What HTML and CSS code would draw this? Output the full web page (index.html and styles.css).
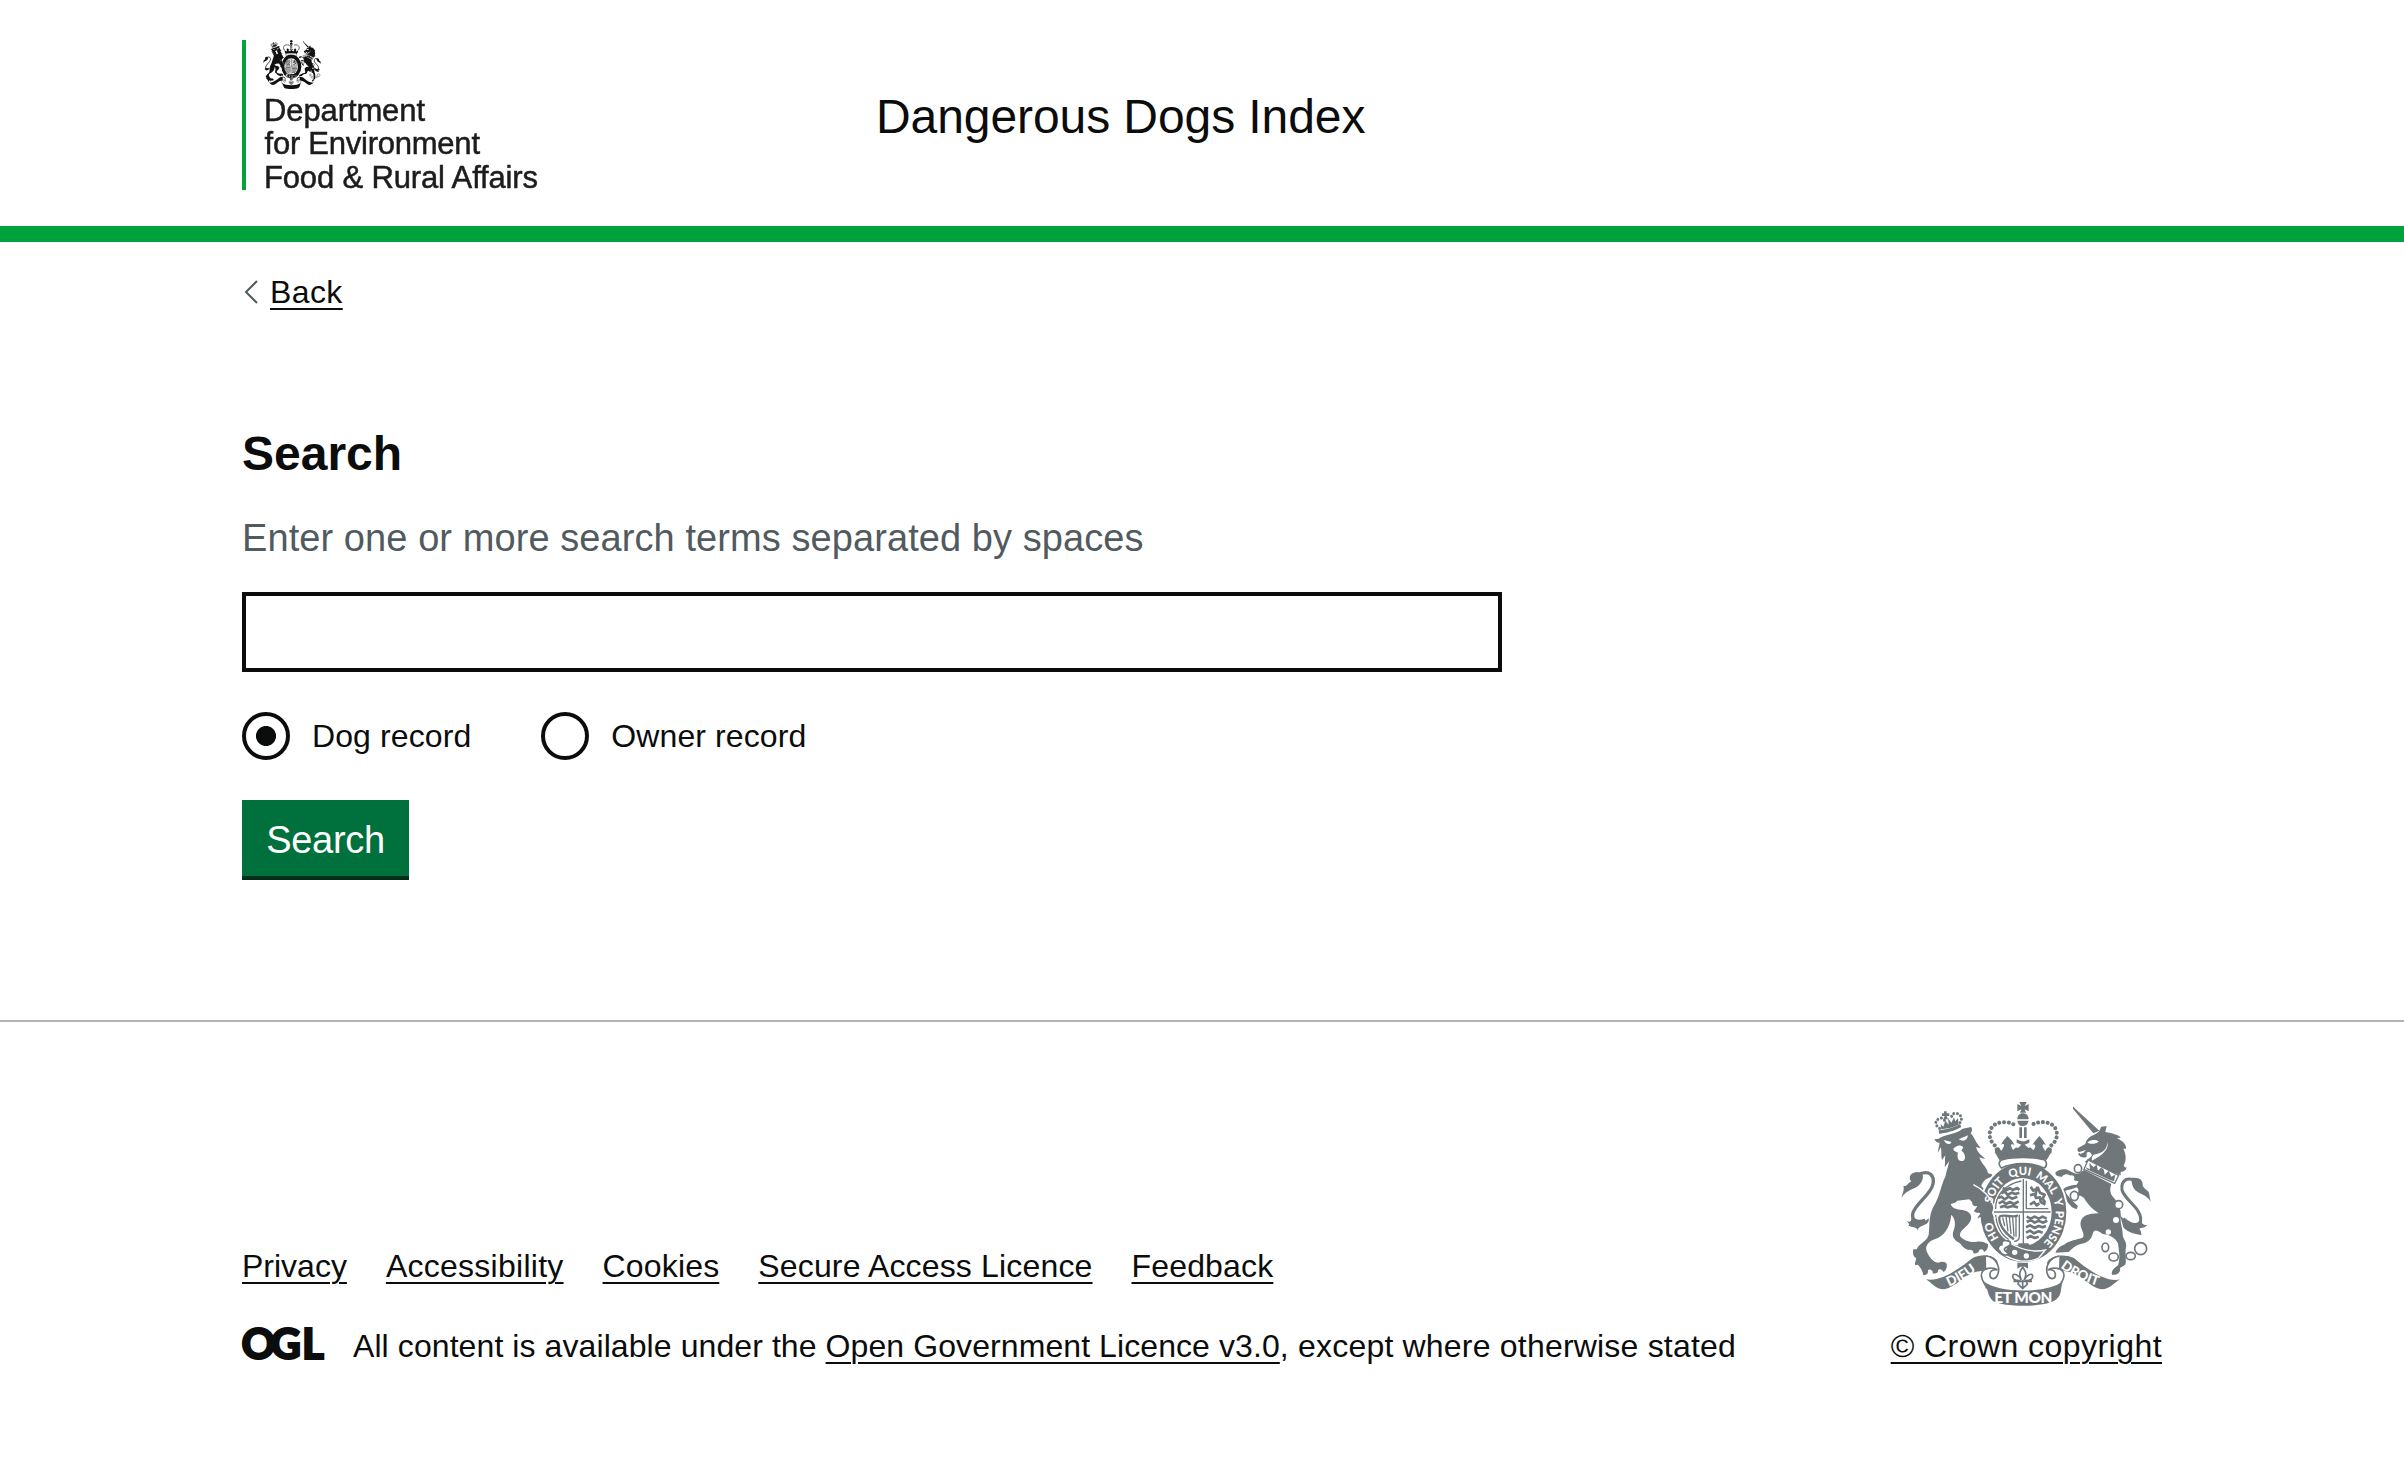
FILE: index.html
```html
<!DOCTYPE html>
<html lang="en">
<head>
<meta charset="utf-8">
<title>Search - Dangerous Dogs Index</title>
<link rel="stylesheet" href="styles.css">
</head>
<body>
<svg class="sprite" aria-hidden="true">
  <symbol id="crest" viewBox="63 66 750 612" preserveAspectRatio="none">
    <!-- lion: tail, body, crown -->
    <path fill="none" stroke="currentColor" stroke-width="10" d="M119 282C148 270 164 286 159 312C152 346 104 372 98 402C96 420 108 430 136 421"/>
    <path fill="currentColor" d="M64 356C68 338 74 328 70 318C82 320 80 312 94 304C88 300 88 290 92 284C104 272 122 274 128 284C132 296 122 316 104 324C86 332 70 340 64 356ZM80 422C90 430 96 422 94 410L112 420C124 428 138 424 146 414L146 424C140 438 118 436 112 450C110 440 96 444 84 436C92 434 84 428 80 422Z"/>
    <path fill="currentColor" d="M163 178L176 176C188 164 232 162 248 146L273 141C278 146 276 154 272 160C284 172 286 188 302 203C296 204 292 202 288 200C292 218 304 226 316 236C308 236 302 234 298 232C304 252 322 262 324 280C340 282 344 290 332 292C318 296 308 304 304 318C322 338 336 360 338 384L332 398L340 416L330 414C330 426 318 428 310 422C314 414 306 412 296 416C292 406 302 404 306 398C296 398 286 400 282 392C290 390 296 384 292 378C282 380 276 376 276 366L268 358L232 362C228 368 218 370 212 372C216 386 230 388 248 390C272 394 280 410 268 428C258 444 238 450 240 468C248 480 270 488 288 486C304 482 314 488 324 492C326 502 320 514 312 516C310 508 304 506 298 510C298 518 288 522 280 520C282 514 274 508 266 510C252 506 246 496 238 488C226 482 214 472 220 454C228 434 226 416 214 404C210 444 192 468 164 478C146 484 134 498 140 514C148 532 158 546 174 548C186 544 196 544 200 552C202 562 198 572 190 576C186 568 180 566 174 570C176 578 168 582 158 580C160 570 150 566 144 570C146 580 140 586 130 586C128 574 124 566 114 554L106 556C102 548 110 540 108 534C98 530 98 516 100 508L110 508C116 490 142 484 146 464C150 426 146 410 160 380C180 350 182 316 196 290C200 272 204 260 208 244L194 262C196 246 194 240 196 226L186 240C182 222 186 214 182 202L174 218C174 204 180 194 178 188C172 188 168 186 163 178Z"/>
    <path fill="#fff" d="M192 180L214 186C212 196 196 194 192 180ZM236 178L264 166C262 182 250 186 236 178ZM220 206C228 196 242 192 250 202L244 212C256 218 260 240 248 243C234 244 230 232 234 218L222 212Z"/>
    <path fill="currentColor" d="M176 151C196 149 224 142 240 132L244 141C226 152 196 160 177 161Z"/>
    <path fill="none" stroke="currentColor" stroke-width="9" stroke-linecap="round" stroke-dasharray=".1 11" d="M179 145C166 138 162 122 178 116C188 110 192 120 196 124M240 128C250 116 242 100 226 100C216 100 216 108 212 116"/>
    <path fill="currentColor" d="M184 148L182 132L190 140L196 122L206 134L204 114L214 128L222 112L226 124L234 114L236 134L210 144ZM192 94H200V100H208V108H200L204 118H190L194 108H186V100H192Z"/>
    <!-- unicorn: horn, body, chained collar, tail -->
    <path fill="currentColor" d="M579 80C582 80 586 86 590 90L658 152L640 160L582 90C580 88 578 84 579 80Z"/>
    <path fill="currentColor" d="M634 168C646 162 654 158 658 152L664 140L680 138L676 156C700 160 716 166 722 172C718 174 714 174 710 174C726 182 740 192 738 206L730 206C738 222 740 240 732 254C728 258 738 264 740 262C738 272 730 276 722 276L722 286L614 246C622 238 630 236 636 226C632 216 626 214 620 218L620 230C612 236 600 232 594 222L602 216C594 218 590 210 594 204L616 192C618 182 624 174 634 168Z"/>
    <path fill="#fff" d="M622 188C630 178 646 178 656 184C652 192 638 194 622 188ZM682 186C688 206 668 226 636 242C634 232 638 222 650 222C670 218 682 206 682 186ZM598 216L618 210L610 218L600 222Z"/>
    <path fill="#fff" stroke="currentColor" stroke-width="4" d="M624 240L716 286L704 310L612 268Z"/>
    <path fill="currentColor" d="M618 262L630 268L628 248L640 262L650 254L654 272L664 262L672 270L674 284L686 272L694 290L706 284L702 304L690 300L620 268Z"/>
    <path fill="currentColor" d="M612 270L694 312C688 332 690 342 704 356C718 374 724 392 722 412C720 430 728 444 728 462C728 478 742 484 738 502C734 520 740 540 736 554L720 564C722 576 714 586 696 584C692 572 704 564 714 556C722 534 716 510 714 490C704 470 682 462 668 462C652 450 642 446 638 462C634 480 620 490 602 492C586 496 576 506 566 516L526 518C530 506 540 498 552 494C568 482 592 478 606 474C620 464 598 448 602 426C606 408 624 400 656 400C636 386 624 374 612 354C600 342 596 350 590 346C596 338 598 328 590 322C576 328 564 330 556 332C560 346 568 350 572 358L594 378L590 388L576 382L562 366C554 360 546 350 544 336C548 322 566 316 590 314L596 304C584 302 572 300 570 286C562 280 550 282 546 290C536 290 526 288 526 278C532 270 546 266 558 268C576 276 586 284 598 280Z"/>
    <circle cx="708" cy="420" r="9" fill="#fff"/><circle cx="685" cy="456" r="8" fill="#fff"/><circle cx="575" cy="294" r="8" fill="#fff"/>
    <g fill="#fff" stroke="currentColor" stroke-width="5">
      <ellipse cx="594" cy="266" rx="11" ry="12"/><ellipse cx="583" cy="348" rx="12" ry="14"/><circle cx="716" cy="374" r="12"/><ellipse cx="676" cy="502" rx="10" ry="13"/><ellipse cx="701" cy="531" rx="14" ry="12"/><ellipse cx="752" cy="528" rx="14" ry="11"/><circle cx="782" cy="506" r="18"/>
    </g>
    <path fill="none" stroke="currentColor" stroke-width="9" d="M768 303C742 288 722 302 726 330C734 360 784 384 782 420C780 438 756 440 730 416"/>
    <path fill="currentColor" d="M754 294C776 290 790 300 788 316C792 330 808 330 808 344L812 366C804 348 784 344 770 334C758 326 754 308 754 294ZM720 406C736 424 752 434 768 430C780 430 778 420 786 412L786 430C792 436 798 436 802 434C796 444 786 442 778 446C786 456 782 462 786 466C768 462 744 460 730 442Z"/>
    <!-- garter -->
    <path fill="#fff" d="M430 243A134 154 0 0 1 520 512L430 551L340 512A134 154 0 0 1 430 243Z"/>
    <ellipse cx="430" cy="397" rx="129" ry="149" fill="currentColor"/>
    <ellipse cx="427" cy="396" rx="88" ry="102" fill="#fff"/>
    <!-- quartered shield -->
    <path fill="none" stroke="currentColor" stroke-width="4" d="M430 297V492M342 396H512M439 302V386H505M347 387C346 350 370 314 424 303M347 405C350 440 366 468 386 478M418 404V468Q418 484 402 484"/>
    <g fill="none" stroke="currentColor" stroke-width="8" stroke-linejoin="round">
      <path d="M368 324l12 6l10-6l8 6l14-6l6 6M364 340l10-6l8 10l14-6l10 4l12-4M354 354l10-4l10 8l12-8l10 6l16-6M356 370l12-6l10 8l12-6l12 6l14-8M360 382l12-4l10 4l16-4l16 4"/>
      <path d="M440 410l12 6l12-6l12 6l12-6l12 6M440 426l12-6l12 8l12-6l12 6l14-6M438 442l12-6l14 8l12-6l12 4l10-4M438 458l12-6l12 8l14-6l12 4M440 474l12-6l12 6l12-4"/>
      <path d="M452 320l8 12l14-8l6 14l14 6l-6 12l8 12M450 346l14-4l4 12l12-2l2 14l14 8M450 374l12-8l8 10l8-6M472 320l-6 26"/>
    </g>
    <g fill="none" stroke="currentColor" stroke-width="4">
      <path stroke-width="7" d="M358 410C374 400 396 416 414 406M358 410C356 432 372 458 402 478"/>
      <path d="M368 412L374 438M378 410L384 454M388 410L393 462M398 412L402 470M408 410V470"/>
    </g>
    <path fill="currentColor" d="M416 490H444L454 500L430 512L410 504Z"/>
    <!-- lion paw and buckle over the garter -->
    <path fill="currentColor" d="M282 312C306 328 330 350 340 384L334 398L342 414L332 412C330 426 314 428 308 420L314 408L292 414L302 400L282 394L292 378L270 350Z"/>
    <path fill="none" stroke="#fff" stroke-width="4" d="M280 314C306 326 334 352 343 384L338 398L346 416"/>
    <path fill="currentColor" stroke="#fff" stroke-width="4" d="M384 486C420 508 460 518 496 510L476 534C440 552 400 542 372 524Z"/>
    <path fill="#fff" stroke="currentColor" stroke-width="5" d="M378 482C396 482 394 496 382 500C370 504 370 512 384 518C384 530 364 526 360 514C348 508 358 494 366 494C364 486 370 480 378 482Z"/>
    <circle cx="404" cy="517" r="8" fill="#fff"/><circle cx="439" cy="528" r="8" fill="#fff"/>
    <!-- royal crown -->
    <path fill="currentColor" d="M344 216C374 206 484 206 514 216L500 240C468 230 390 230 358 240Z"/>
    <path fill="#fff" stroke="currentColor" stroke-width="5" d="M370 238C400 230 458 230 488 238C502 240 502 260 492 264C454 246 402 246 364 264C354 254 356 240 370 238Z"/>
    <path fill="currentColor" d="M346 220L344 206C356 196 360 206 364 214L372 198C374 190 366 190 362 196L370 182L382 168L396 182L404 196C398 190 390 192 394 200L400 212C404 204 408 200 414 204L424 194L410 188V178L424 184H434L448 178V188L434 194L446 204C452 200 456 206 460 212L466 200C466 192 460 190 456 196L466 182L478 168L490 182L498 196C492 190 486 192 488 200L496 214C500 204 506 196 516 208L514 220Z"/>
    <path fill="none" stroke="currentColor" stroke-width="12" stroke-linecap="round" stroke-dasharray=".1 14.2" d="M344 196C326 180 322 150 344 134C364 122 390 126 402 134M514 196C534 180 538 150 516 134C496 122 472 126 460 132"/>
    <path fill="currentColor" d="M418 66H440L434 78L446 72V94L434 88L438 98H420L424 88L412 94V72L424 78ZM412 118C412 106 420 100 428 100C438 100 446 106 446 118ZM412 122H446C444 132 438 138 428 138S414 132 412 122ZM418 142H426V174H418ZM432 142H440V174H432Z"/>
    <!-- motto ribbon and fleur-de-lis -->
    <path fill="currentColor" d="M138 598C182 606 232 570 278 534C306 520 342 524 352 544C356 560 340 566 328 566L300 574C262 574 230 622 192 628C166 628 156 608 138 598Z"/>
    <path fill="currentColor" d="M720 598C680 608 626 572 582 534C552 520 512 526 502 546C498 562 514 570 530 566L556 574C596 576 628 622 664 628C692 628 704 606 720 598Z"/>
    <path fill="#fff" stroke="currentColor" stroke-width="5" d="M318 528C352 532 362 566 352 586C346 600 330 598 330 586C328 574 340 566 352 570C340 560 304 562 304 586C304 606 318 612 320 626M538 528C504 534 494 566 504 586C510 600 526 598 526 586C528 574 516 566 504 570C516 560 552 562 552 586C552 606 536 612 536 626"/>
    <path fill="currentColor" d="M312 604C350 640 506 642 548 604C540 630 548 650 520 664C480 682 376 682 340 664C322 650 324 624 312 604Z"/>
    <path fill="currentColor" d="M412 548H444V566L434 560H422L412 566Z"/>
    <path fill="none" stroke="currentColor" stroke-width="5" d="M428 562C414 578 420 590 424 600C418 586 400 576 398 588C398 598 406 602 418 602L414 612L428 626L442 612L438 602C452 602 458 598 458 588C456 576 440 586 432 600C438 588 442 578 428 562ZM400 604H456M428 600V622"/>
  </symbol>
</svg>

<header class="header">
  <div class="container header-row">
    <svg class="dept-logo" viewBox="0 0 296 150" role="img" aria-label="Department for Environment Food and Rural Affairs">
      <use class="dept-crest" href="#crest" x="17" y="0" width="58" height="49"/>
      <g class="dept-name">
        <text x="18" y="80.7" textLength="161">Department</text>
        <text x="18.5" y="114.2" textLength="215.5">for Environment</text>
        <text x="18" y="148" textLength="274">Food &amp; Rural Affairs</text>
      </g>
    </svg>
    <span class="service-name">Dangerous Dogs Index</span>
  </div>
</header>

<main class="container main">
  <nav class="back">
    <svg class="chevron" viewBox="0 0 14 24"><path d="M13 1L2 12L13 23"/></svg>
    <a href="#" class="link back-link">Back</a>
  </nav>
  <form class="search">
    <h1 class="title"><label for="terms">Search</label></h1>
    <p class="hint">Enter one or more search terms separated by spaces</p>
    <input class="input" id="terms" type="text">
    <div class="radios">
      <label class="radio"><input class="radio-input" type="radio" name="type" checked>Dog record</label>
      <label class="radio"><input class="radio-input" type="radio" name="type">Owner record</label>
    </div>
    <button class="button" type="button">Search</button>
  </form>
</main>

<footer class="footer">
  <div class="container footer-row">
    <div class="footer-meta">
      <nav class="footer-links">
        <a href="#" class="link">Privacy</a>
        <a href="#" class="link link-wide">Accessibility</a>
        <a href="#" class="link link-mid">Cookies</a>
        <a href="#" class="link link-mid">Secure Access Licence</a>
        <a href="#" class="link link-mid">Feedback</a>
      </nav>
      <div class="licence">
        <svg class="ogl" viewBox="0 0 82 34" role="img" aria-label="OGL"><text x="-.5 28.5 60" y="32.5">OGL</text></svg>
        <p class="licence-text">All content is available under the <a href="#" class="link">Open Government Licence v3.0</a><span class="licence-end">, except where otherwise stated</span></p>
      </div>
    </div>
    <div class="copyright">
      <svg class="crest" viewBox="63 66 750 612">
        <use href="#crest" x="63" y="66" width="750" height="612"/>
        <path id="garter-line" fill="none" d="M430 513A95 112 0 0 1 430 285A95 112 0 0 1 430 513"/>
        <path id="ribbon-l" fill="none" d="M207 620Q260 598 312 553"/>
        <path id="ribbon-r" fill="none" d="M541 562Q596 604 672 622"/>
        <g class="crest-text" font-size="34" text-anchor="middle">
          <text><textPath href="#garter-line" startOffset="17%">HO</textPath></text>
          <text><textPath href="#garter-line" startOffset="35%">SOIT</textPath></text>
          <text><textPath href="#garter-line" startOffset="48.5%">QUI</textPath></text>
          <text><textPath href="#garter-line" startOffset="61%">MAL</textPath></text>
          <text><textPath href="#garter-line" startOffset="70.5%">Y</textPath></text>
          <text><textPath href="#garter-line" startOffset="82%">PENSE</textPath></text>
        </g>
        <g class="crest-text" font-size="40">
          <text><textPath href="#ribbon-l">DIEU</textPath></text>
          <text><textPath href="#ribbon-r">DROIT</textPath></text>
          <text x="343" y="668" font-size="46" textLength="174">ET MON</text>
        </g>
      </svg>
      <a href="#" class="link copyright-link">© Crown copyright</a>
    </div>
  </div>
</footer>
</body>
</html>
```
FILE: styles.css
```css
* { box-sizing: border-box; }

body {
  margin: 0;
  background: #fff;
  color: #0b0c0c;
  font: 32px/40px "Liberation Sans", Arial, sans-serif;
}

.sprite { display: block; width: 0; height: 0; }
.container { width: 1920px; margin: 0 auto; }

.crest-text {
  fill: #fff;
  font-family: Lato, sans-serif;
  font-weight: 900;
}

.link {
  color: inherit;
  text-decoration: underline;
  text-decoration-thickness: 2px;
  text-underline-offset: 5px;
}
.link-mid { letter-spacing: .16px; }
.link-wide { letter-spacing: .26px; }

/* Header */
.header { height: 242px; border-bottom: 16px solid #00a33b; }
.header-row { display: flex; align-items: flex-start; padding-top: 40px; }
.dept-logo {
  width: 300px;
  height: 150px;
  border-left: 4px solid #00a33b;
  overflow: hidden;
  color: #111;
}
.dept-crest { filter: blur(.4px); }
.dept-name {
  fill: #1c1c1c;
  stroke: #1c1c1c;
  stroke-width: .5px;
  font-size: 31px;
  filter: blur(.5px);
}
.service-name {
  margin: 47px 0 0 334px;
  font-size: 48px;
  line-height: 60px;
  letter-spacing: -.08px;
}

/* Search form */
.main { height: 778px; }
.back { display: flex; align-items: center; padding-top: 30px; }
.chevron {
  width: 14px;
  height: 24px;
  margin: 0 12px 0 2px;
  fill: none;
  stroke: #505a5f;
  stroke-width: 2;
}
.back-link { letter-spacing: .4px; }
.search { padding-top: 112px; }
.title { margin: 0; font-size: 48px; line-height: 60px; letter-spacing: 0; }
.hint { margin: 29px 0; color: #505a5f; font-size: 38px; line-height: 50px; letter-spacing: .08px; }
.input {
  display: block;
  width: 1260px;
  height: 80px;
  border: 4px solid #0b0c0c;
  border-radius: 0;
  background: #fff;
}
.radios { display: flex; gap: 70px; margin-top: 40px; letter-spacing: .1px; }
.radio { display: flex; align-items: center; height: 48px; }
.radio-input {
  appearance: none;
  width: 48px;
  height: 48px;
  margin: 0 22px 0 0;
  border: 4px solid #0b0c0c;
  border-radius: 50%;
}
.radio-input:checked { background: radial-gradient(circle, #0b0c0c 9.6px, transparent 10.4px); }
.button {
  display: block;
  width: 167px;
  height: 80px;
  margin-top: 40px;
  padding: 0;
  border: 0;
  background: #00703c;
  box-shadow: inset 0 -4px #002d18;
  color: #fff;
  font: 38px/80px "Liberation Sans", Arial, sans-serif;
  letter-spacing: -.3px;
}

/* Footer */
.footer { border-top: 2px solid #b1b4b6; }
.footer-row {
  display: flex;
  justify-content: space-between;
  align-items: flex-end;
  height: 344px;
}
.footer-links { display: flex; gap: 39px; margin-bottom: 40px; }
.licence { display: flex; align-items: flex-start; }
.ogl { width: 82px; height: 34px; margin: 0 29px 0 0; overflow: visible; }
.ogl text {
  fill: #0b0c0c;
  stroke: #0b0c0c;
  stroke-width: 2px;
  font: 900 42px Lato, sans-serif;
}
.licence-text { margin: 0; letter-spacing: .085px; }
.licence-end { letter-spacing: .2px; }
.copyright { display: flex; flex-direction: column; align-items: center; gap: 20px; }
.crest { width: 250px; height: 204px; color: #6f777b; }
.copyright-link { letter-spacing: .45px; }
```
